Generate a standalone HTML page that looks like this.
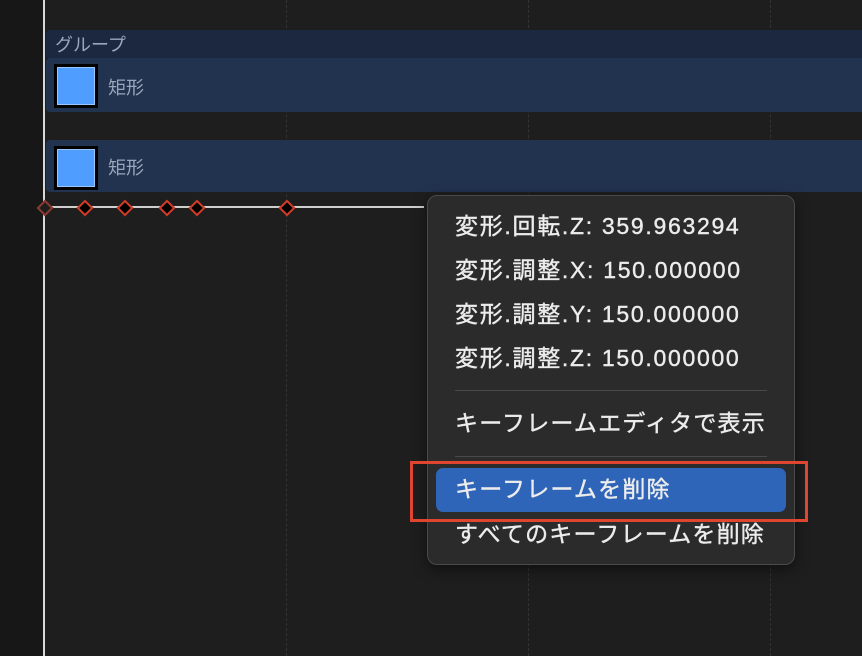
<!DOCTYPE html><html><head><meta charset="utf-8"><style>
body{margin:0;width:862px;height:656px;background:#1e1e1e;position:relative;overflow:hidden;font-family:"Liberation Sans","Noto Sans CJK JP",sans-serif}
.a{position:absolute}
.dash{position:absolute;top:0;width:0;height:656px;border-left:1px dashed #333}
.sq{position:absolute;left:54px;width:38px;height:38px;background:#4f9dff;border:3px solid #000;box-shadow:inset 0 0 0 1px #9cc6ff}
.lbl{position:absolute;left:108px;color:#9aa6bb;font-size:18px}
.kf{position:absolute;top:202px;width:8px;height:8px;background:#000;border:2px solid #d23c2a;transform:rotate(45deg)}
.it{position:absolute;left:455px;color:#ececec;font-size:23px;line-height:30px;white-space:nowrap;letter-spacing:1.2px;-webkit-text-stroke:0.4px #ececec}
.n{letter-spacing:1.7px}
.sep{position:absolute;left:455px;width:312px;height:1px;background:#4a4a4a}
</style></head><body>
<div class="a" style="left:0;top:0;width:44px;height:656px;background:#171717"></div>
<div class="dash" style="left:286px"></div><div class="dash" style="left:528px"></div><div class="dash" style="left:770px"></div>
<div class="a" style="left:46px;top:30px;width:816px;height:28px;background:#1b2840;border-radius:4px 0 0 0"></div>
<div class="a" style="left:55px;top:31px;color:#9aa6bb;font-size:18px">グループ</div>
<div class="a" style="left:46px;top:58px;width:816px;height:54px;background:#22334f;border-radius:4px 0 0 4px"></div>
<div class="sq" style="top:64px"></div><div class="lbl" style="top:74px">矩形</div>
<div class="a" style="left:46px;top:140px;width:816px;height:52px;background:#22334f;border-radius:4px 0 0 4px"></div>
<div class="sq" style="top:146px"></div><div class="lbl" style="top:154px">矩形</div>
<div class="a" style="left:44px;top:206px;width:380px;height:2px;background:#cfcfcf"></div>
<div class="a" style="left:43px;top:0;width:2px;height:656px;background:#d8d8d8"></div>
<div class="kf" style="left:39px;background:#1e1e1e;border-color:#8a3a30"></div>
<div class="kf" style="left:79px"></div><div class="kf" style="left:119px"></div><div class="kf" style="left:161px"></div><div class="kf" style="left:191px"></div><div class="kf" style="left:281px"></div>
<div class="a" style="left:427px;top:195px;width:366px;height:368px;background:#2b2b2b;border:1px solid #4a4a4a;border-radius:10px;box-shadow:0 4px 14px rgba(0,0,0,.5)"></div>
<div class="it n" style="top:211px">変形.回転.Z: 359.963294</div>
<div class="it n" style="top:255px">変形.調整.X: 150.000000</div>
<div class="it n" style="top:299px">変形.調整.Y: 150.000000</div>
<div class="it n" style="top:343px">変形.調整.Z: 150.000000</div>
<div class="sep" style="top:390px"></div>
<div class="it" style="top:408px">キーフレームエディタで表示</div>
<div class="sep" style="top:456px"></div>
<div class="a" style="left:436px;top:468px;width:350px;height:44px;background:#2f65b8;border-radius:7px"></div>
<div class="it" style="top:474px">キーフレームを削除</div>
<div class="a" style="left:410px;top:461px;width:392px;height:55px;border:3px solid #e0462f"></div>
<div class="it" style="top:519px">すべてのキーフレームを削除</div>
</body></html>
